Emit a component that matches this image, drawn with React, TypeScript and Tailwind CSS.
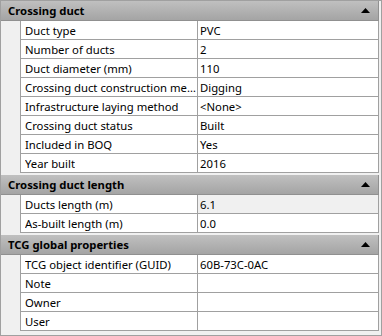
const groups = [
  {
    title: 'Crossing duct',
    rows: [
      ['Duct type', 'PVC'],
      ['Number of ducts', '2'],
      ['Duct diameter (mm)', '110'],
      ['Crossing duct construction method', 'Digging'],
      ['Infrastructure laying method', '<None>'],
      ['Crossing duct status', 'Built'],
      ['Included in BOQ', 'Yes'],
      ['Year built', '2016'],
    ],
  },
  {
    title: 'Crossing duct length',
    rows: [
      ['Ducts length (m)', '6.1', true],
      ['As-built length (m)', '0.0'],
    ],
  },
  {
    title: 'TCG global properties',
    rows: [
      ['TCG object identifier (GUID)', '60B-73C-0AC'],
      ['Note', ''],
      ['Owner', ''],
      ['User', ''],
    ],
  },
];

const CollapseArrow = () => (
  <svg width="9" height="5" viewBox="0 0 9 5" className="block">
    <path d="M0 5 L4.5 0 L9 5 Z" fill="#000" />
  </svg>
);

const App = () => {
  return (
    <div
      className="w-[382px] h-[336px] border border-[#a0a0a0] bg-[#f0f0f0] pr-[2px] text-[11.3px] text-black overflow-hidden"
      style={{ fontFamily: '"Noto Sans", "Liberation Sans", sans-serif' }}
    >
      {groups.map((group, gi) => (
        <div key={group.title} className={gi > 0 ? 'mt-[2px]' : ''}>
          <div className="h-[20px] flex items-center justify-between pl-[7px] pr-[8px] bg-gradient-to-b from-[#c0c0c0] to-[#a4a4a4] border-b border-r border-[#909090] font-bold">
            <span className="leading-[15px]">{group.title}</span>
            <CollapseArrow />
          </div>
          {group.rows.map(([label, value, muted]) => (
            <div key={label as string} className="flex h-[19px]">
              <div className="w-[19px] shrink-0" />
              <div className="flex flex-1 border-l border-b border-r border-[#a0a0a0] bg-white">
                <div className="w-[177px] shrink-0 border-r border-[#a0a0a0] pl-[4px] pr-[1px] flex items-center overflow-hidden">
                  <span className="truncate leading-[15px] pt-[1px]">{label}</span>
                </div>
                <div
                  className={`flex-1 pl-[2px] flex items-center ${muted ? 'bg-[#f0f0f0]' : 'bg-white'}`}
                >
                  <span className="leading-[15px] pt-[1px]">{value}</span>
                </div>
              </div>
            </div>
          ))}
        </div>
      ))}
    </div>
  );
};

export default App;
